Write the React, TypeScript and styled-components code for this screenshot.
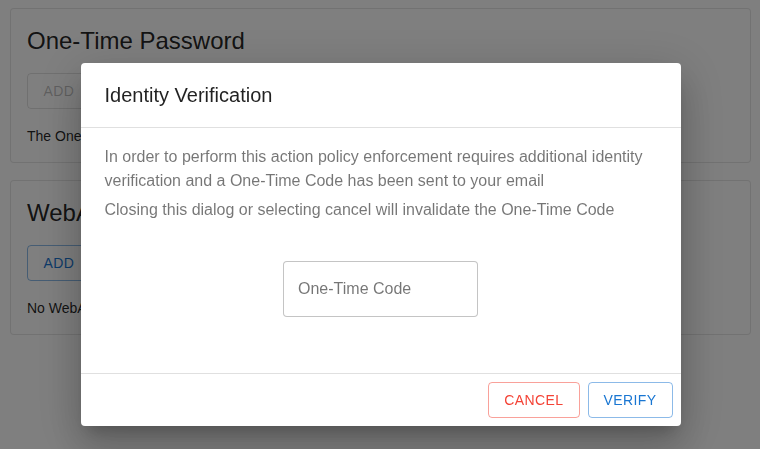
import styled, { createGlobalStyle } from 'styled-components'

const colors = {
  text: 'rgba(0, 0, 0, 0.87)',
  muted: 'rgba(0, 0, 0, 0.54)',
  divider: 'rgba(0, 0, 0, 0.12)',
  primary: '#1976d2',
  danger: '#f44336',
}

const GlobalStyle = createGlobalStyle`
  html, body {
    margin: 0;
    padding: 0;
    background: #fff;
    font-family: "Liberation Sans", Arial, Helvetica, sans-serif;
    color: ${colors.text};
  }
  * { box-sizing: border-box; }
`

const Page = styled.div`
  display: flex;
  flex-direction: column;
  gap: 17px;
  padding: 8px 9px 0 10px;
  min-height: 449px;
`

const Card = styled.section`
  display: flex;
  flex-direction: column;
  align-items: flex-start;
  padding: 16px;
  border: 1px solid rgba(0, 0, 0, 0.1);
  border-radius: 4px;
  background: #fff;
`

const CardTitle = styled.h2`
  margin: 0 0 16px;
  font-size: 24px;
  font-weight: 400;
  line-height: 32px;
  color: ${colors.text};
`

const CardText = styled.p`
  margin: 17px 0 0;
  font-size: 14px;
  line-height: 20px;
  color: ${colors.text};
`

const OutlinedButton = styled.button<{ tone: 'primary' | 'danger' | 'disabled' }>`
  min-width: 64px;
  height: 36px;
  padding: 0 15px;
  border-radius: 4px;
  background: transparent;
  font-family: inherit;
  font-size: 14px;
  font-weight: 400;
  letter-spacing: 0.4px;
  text-transform: uppercase;
  cursor: pointer;
  color: ${({ tone }) =>
    tone === 'primary' ? colors.primary : tone === 'danger' ? colors.danger : 'rgba(0, 0, 0, 0.26)'};
  border: 1px solid
    ${({ tone }) =>
      tone === 'primary'
        ? 'rgba(25, 118, 210, 0.5)'
        : tone === 'danger'
        ? 'rgba(244, 67, 54, 0.5)'
        : 'rgba(0, 0, 0, 0.12)'};
`

const Backdrop = styled.div`
  position: fixed;
  inset: 0;
  display: flex;
  justify-content: center;
  align-items: flex-start;
  padding: 63px 0 0 1px;
  background: rgba(0, 0, 0, 0.5);
`

const Dialog = styled.div`
  width: 600px;
  display: flex;
  flex-direction: column;
  background: #fff;
  border-radius: 4px;
  box-shadow: 0px 11px 15px -7px rgba(0, 0, 0, 0.2), 0px 24px 38px 3px rgba(0, 0, 0, 0.14),
    0px 9px 46px 8px rgba(0, 0, 0, 0.12);
`

const DialogTitle = styled.h2`
  margin: 0;
  padding: 16px 24px;
  font-size: 20px;
  font-weight: 400;
  line-height: 32px;
  color: ${colors.text};
`

const DialogContent = styled.div`
  display: flex;
  flex-direction: column;
  padding: 17px 24px 56px;
  border-top: 1px solid ${colors.divider};
  border-bottom: 1px solid ${colors.divider};
`

const DialogText = styled.p<{ gap?: number }>`
  margin: ${({ gap }) => gap ?? 0}px 0 0;
  font-size: 16px;
  line-height: 24px;
  color: ${colors.muted};
`

const CodeField = styled.input`
  align-self: center;
  width: 195px;
  height: 56px;
  margin-top: 39px;
  padding: 0 14px;
  border: 1px solid rgba(0, 0, 0, 0.23);
  border-radius: 4px;
  font-family: inherit;
  font-size: 16px;
  color: ${colors.text};
  outline: none;

  &::placeholder {
    color: ${colors.muted};
    opacity: 1;
  }
`

const DialogActions = styled.div`
  display: flex;
  justify-content: flex-end;
  gap: 8px;
  padding: 8px;
`

export default function App() {
  return (
    <>
      <GlobalStyle />
      <Page>
        <Card>
          <CardTitle>One-Time Password</CardTitle>
          <OutlinedButton tone="disabled" disabled>
            Add
          </OutlinedButton>
          <CardText>The One-Time Password has been registered.</CardText>
        </Card>
        <Card>
          <CardTitle>WebAuthn Credentials</CardTitle>
          <OutlinedButton tone="primary">Add</OutlinedButton>
          <CardText>No WebAuthn Credentials have been registered.</CardText>
        </Card>
      </Page>
      <Backdrop>
        <Dialog role="dialog">
          <DialogTitle>Identity Verification</DialogTitle>
          <DialogContent>
            <DialogText>
              In order to perform this action policy enforcement requires additional identity
              verification and a One-Time Code has been sent to your email
            </DialogText>
            <DialogText gap={5}>
              Closing this dialog or selecting cancel will invalidate the One-Time Code
            </DialogText>
            <CodeField placeholder="One-Time Code" />
          </DialogContent>
          <DialogActions>
            <OutlinedButton tone="danger">Cancel</OutlinedButton>
            <OutlinedButton tone="primary">Verify</OutlinedButton>
          </DialogActions>
        </Dialog>
      </Backdrop>
    </>
  )
}
